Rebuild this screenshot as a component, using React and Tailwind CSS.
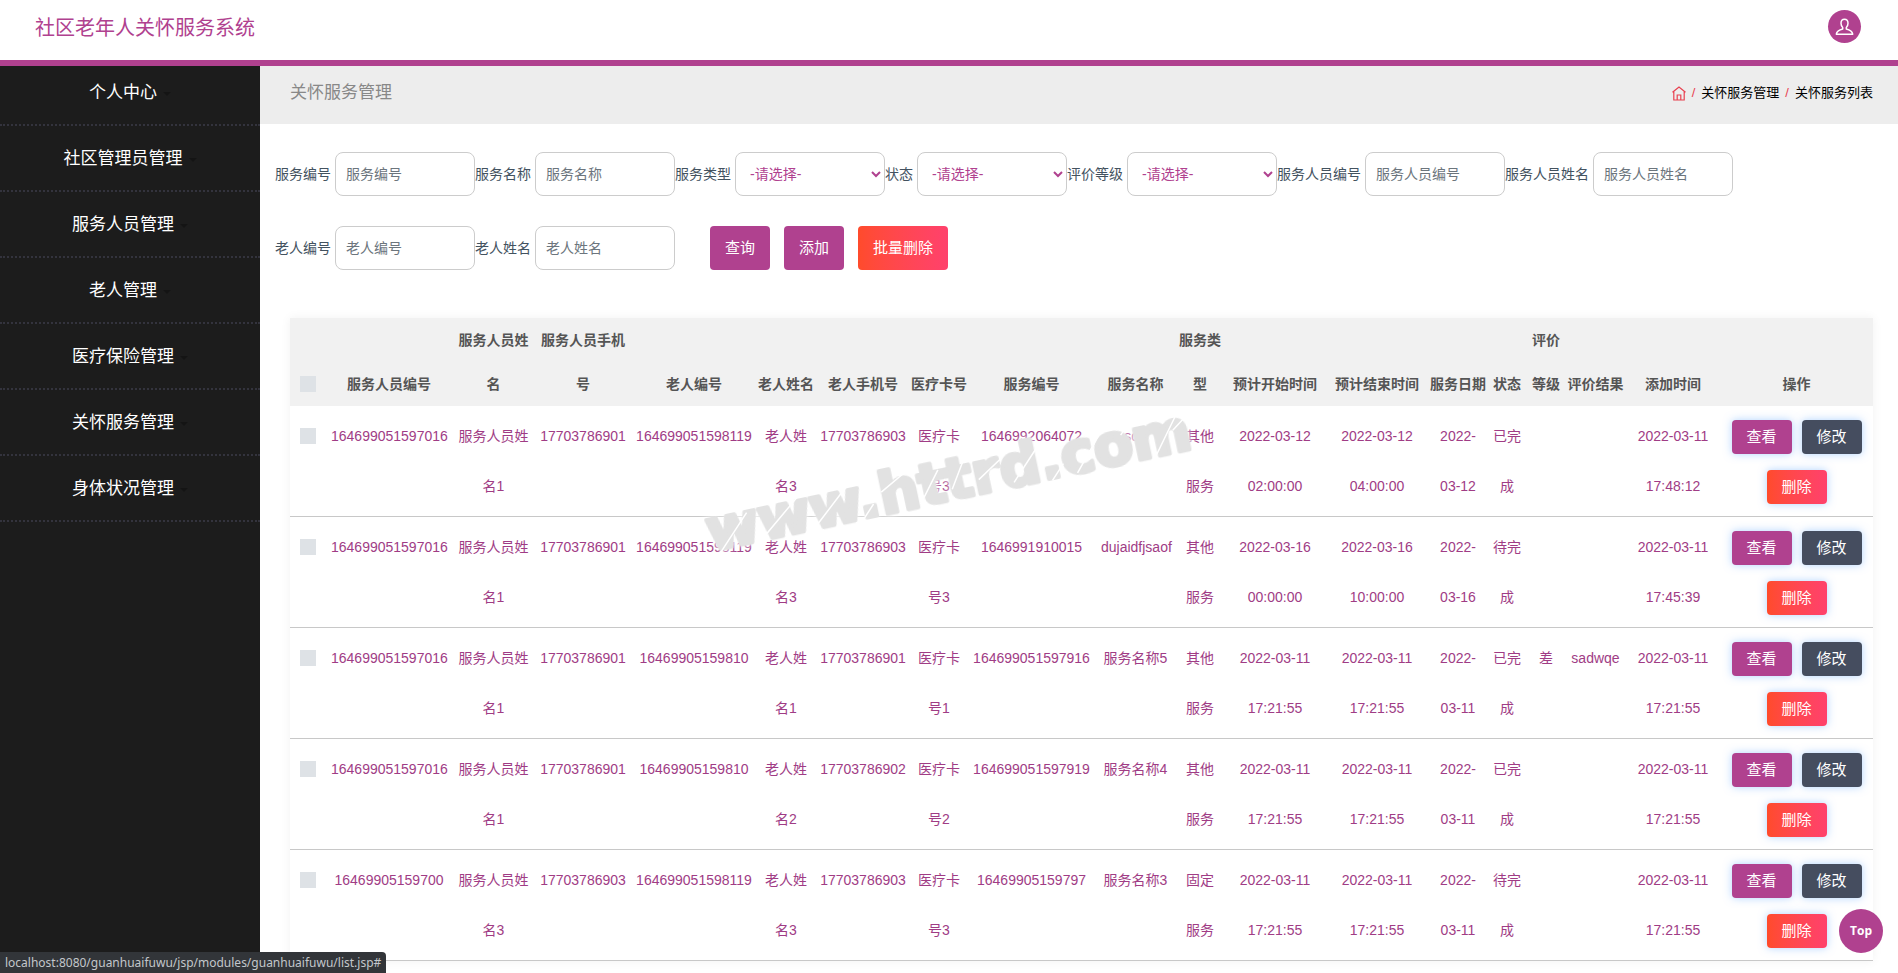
import React, { useState } from 'react';

const MENU = ['个人中心', '社区管理员管理', '服务人员管理', '老人管理', '医疗保险管理', '关怀服务管理', '身体状况管理'];

const FILTERS = [
    { id: 'fuwubianhao', label: '服务编号' },
    { id: 'fuwumingcheng', label: '服务名称' },
    { id: 'fuwuleixing', label: '服务类型', select: true },
    { id: 'zhuangtai', label: '状态', select: true },
    { id: 'pingjiadengji', label: '评价等级', select: true },
    { id: 'renyuanbianhao', label: '服务人员编号' },
    { id: 'renyuanxingming', label: '服务人员姓名' },
    { id: 'laorenbianhao', label: '老人编号' },
    { id: 'laorenxingming', label: '老人姓名' },
];

const COLUMNS = [
    { title: '服务人员编号', width: 'w-[126px]' },
    { title: '服务人员姓名', width: 'w-[83px]' },
    { title: '服务人员手机号', width: 'w-[96px]' },
    { title: '老人编号', width: 'w-[126px]' },
    { title: '老人姓名', width: 'w-[58px]' },
    { title: '老人手机号', width: 'w-[96px]' },
    { title: '医疗卡号', width: 'w-[56px]' },
    { title: '服务编号', width: 'w-[129px]' },
    { title: '服务名称', width: 'w-[79px]' },
    { title: '服务类型', width: 'w-[50px]' },
    { title: '预计开始时间', width: 'w-[100px]' },
    { title: '预计结束时间', width: 'w-[104px]' },
    { title: '服务日期', width: 'w-[58px]' },
    { title: '状态', width: 'w-[40px]' },
    { title: '评价等级', width: 'w-[38px]' },
    { title: '评价结果', width: 'w-[61px]' },
    { title: '添加时间', width: 'w-[94px]' },
];

const ROWS = [
    ['164699051597016', '服务人员姓名1', '17703786901', '164699051598119', '老人姓名3', '17703786903', '医疗卡号3', '1646992064072', 'sda', '其他服务', '2022-03-12 02:00:00', '2022-03-12 04:00:00', '2022-03-12', '已完成', '', '', '2022-03-11 17:48:12'],
    ['164699051597016', '服务人员姓名1', '17703786901', '164699051598119', '老人姓名3', '17703786903', '医疗卡号3', '1646991910015', 'dujaidfjsaof', '其他服务', '2022-03-16 00:00:00', '2022-03-16 10:00:00', '2022-03-16', '待完成', '', '', '2022-03-11 17:45:39'],
    ['164699051597016', '服务人员姓名1', '17703786901', '16469905159810', '老人姓名1', '17703786901', '医疗卡号1', '164699051597916', '服务名称5', '其他服务', '2022-03-11 17:21:55', '2022-03-11 17:21:55', '2022-03-11', '已完成', '差', 'sadwqe', '2022-03-11 17:21:55'],
    ['164699051597016', '服务人员姓名1', '17703786901', '16469905159810', '老人姓名2', '17703786902', '医疗卡号2', '164699051597919', '服务名称4', '其他服务', '2022-03-11 17:21:55', '2022-03-11 17:21:55', '2022-03-11', '已完成', '', '', '2022-03-11 17:21:55'],
    ['16469905159700', '服务人员姓名3', '17703786903', '164699051598119', '老人姓名3', '17703786903', '医疗卡号3', '16469905159797', '服务名称3', '固定服务', '2022-03-11 17:21:55', '2022-03-11 17:21:55', '2022-03-11', '待完成', '', '', '2022-03-11 17:21:55'],
];

function UserIcon() {
    return (
        <svg width="19" height="18" viewBox="0 0 19 18" fill="none" stroke="currentColor" strokeWidth="1.5" strokeLinejoin="round">
            <path d="M9.5 1.2c-2.2 0-3.5 1.7-3.500 4 0 1.900.7 3.400 1.700 4.300v1.600c-2.900.7-5.800 1.700-6.400 5.100h16.400c-.6-3.400-3.500-4.400-6.400-5.100V9.500c1-.9 1.700-2.400 1.700-4.300 0-2.300-1.300-4-3.500-4z" />
        </svg>
    );
}

function HomeIcon() {
    return (
        <svg width="14" height="15" viewBox="0 0 14 15" fill="none" stroke="currentColor" strokeWidth="1.2">
            <path d="M.5 6.300 7 1l6.500 5.300M1.800 5.500v8.500h10.400V5.500M5.200 14V9h3.600v5" />
        </svg>
    );
}

function Watermark() {
    return (
        <svg className="absolute left-[418px] top-[334px] pointer-events-none" width="540" height="170" viewBox="0 0 540 170" aria-hidden="true">
            <g transform="rotate(-12 270 85)" fontSize="57" fontWeight="bold" fontFamily="'DejaVu Sans', sans-serif" strokeLinejoin="round">
                {/* The text's own halo goes below the grey letters */}
                <text
                    x="270" y="106" textAnchor="middle" fill="#e2e2e2" stroke="#e2e2e2" strokeWidth="4"
                    className="drop-shadow-[0_0_3px_#ffffff]"
                >
                    www.httrd.com
                </text>
                <path
                    d="M32 110 66 76M72 108l46-36M124 110l44-38M178 108l14-14M202 84l30-16M238 104l24-30M272 96l18-28M300 92l26-16M334 102l34-34M372 108l14-14M398 106l30-34M448 78l14-14M478 106l28-36M500 84l20-14"
                    stroke="#ffffff" strokeWidth="1.5" fill="none"
                />
            </g>
        </svg>
    );
}

function Field({ id, label, select }) {
    return (
        <div className="flex items-center gap-1">
            <label htmlFor={id} className="text-[#43525f] whitespace-nowrap">{label}</label>
            {select ? (
                <select id={id} className="w-[150px] h-11 pl-2.5 border border-[#ccc] rounded-lg bg-white text-[#b0418f] outline-none">
                    <option>-请选择-</option>
                </select>
            ) : (
                <input
                    id={id}
                    type="text"
                    placeholder={label}
                    className="w-[140px] h-11 px-2.5 border border-[#ccc] rounded-lg bg-white text-[#b0418f] placeholder:text-[#6c757d] outline-none"
                />
            )}
        </div>
    );
}

function RowButton({ children, className }) {
    return (
        <button type="button" className={`w-[60px] h-[34px] my-2 rounded text-white text-[15px] shadow-[0_0_8px_rgba(100,170,255,0.5)] ${className}`}>
            {children}
        </button>
    );
}

export default function App() {
    const [selected, setSelected] = useState([]);
    const allSelected = selected.length === ROWS.length;

    const toggle = (idx) => {
        setSelected(prev => prev.includes(idx) ? prev.filter(i => i !== idx) : [...prev, idx]);
    };

    const checkbox = 'block appearance-none size-4 mx-auto bg-[#dee2e6] checked:bg-[#b0418f]';

    return (
        <div className="h-screen flex flex-col overflow-hidden bg-white text-sm font-['Liberation_Sans','Noto_Sans_CJK_SC',sans-serif]">
            <header className="relative z-10 shrink-0 h-[66px] pb-1.5 pl-[35px] pr-[37px] flex items-start justify-between bg-white border-b-6 border-[#b0418f]">
                <h1 className="mt-3 text-xl leading-8 text-[#b0418f]">社区老年人关怀服务系统</h1>
                <button type="button" aria-label="个人中心" className="mt-2.5 size-[33px] rounded-full bg-[#b0418f] text-white flex items-center justify-center">
                    <UserIcon />
                </button>
            </header>

            {/* Slides under the header's bottom border */}
            <div className="flex flex-1 min-h-0 -mt-1.5">
                <nav className="w-[260px] shrink-0 bg-[#1c1c1c]">
                    {MENU.map(item => (
                        <a key={item} href="#" className="flex items-center justify-center h-[66px] pt-[3px] border-b-2 border-dotted border-[#33333d] text-[17px] text-white">
                            {item}
                            <span className="ml-1.5 border-x-4 border-t-4 border-x-transparent border-t-[#141414]" />
                        </a>
                    ))}
                </nav>

                <main className="relative flex-1 min-w-0 overflow-y-auto [scrollbar-width:none]">
                    <div className="h-16 pt-0.5 pl-[30px] pr-[25px] flex items-center justify-between bg-[#ededed]">
                        <h2 className="text-[17px] text-[#888]">关怀服务管理</h2>
                        <div className="flex items-center gap-1.5 text-[13px] text-[#e8404f]">
                            <a href="#" aria-label="首页"><HomeIcon /></a>
                            <span>/</span>
                            <a href="#" className="text-black">关怀服务管理</a>
                            <span>/</span>
                            <a href="#" className="text-black">关怀服务列表</a>
                        </div>
                    </div>

                    <form className="flex flex-wrap gap-y-[30px] pt-7 pl-[15px]" onSubmit={e => e.preventDefault()}>
                        {FILTERS.map(f => <Field key={f.id} {...f} />)}
                        <div className="flex gap-3.5 ml-[35px] text-white text-[15px]">
                            <button type="submit" className="w-[60px] h-11 rounded bg-[#b0418f]">查询</button>
                            <button type="button" className="w-[60px] h-11 rounded bg-[#b0418f]">添加</button>
                            <button type="button" className="w-[90px] h-11 rounded bg-linear-to-r from-[#ff4b2b] to-[#ff416c]">批量删除</button>
                        </div>
                    </form>

                    <div className="mt-12 ml-[30px] mr-[25px] shadow-[0_0_10px_rgba(0,0,0,0.06)]">
                        <table className="w-full table-fixed text-center">
                            <thead className="bg-[#f1f1f1] text-[#555] leading-[44px]">
                                <tr>
                                    <th className="w-9 pb-3.5 align-bottom">
                                        <input
                                            type="checkbox"
                                            aria-label="全选"
                                            className={checkbox}
                                            checked={allSelected}
                                            onChange={() => setSelected(allSelected ? [] : ROWS.map((_, i) => i))}
                                        />
                                    </th>
                                    {COLUMNS.map(c => (
                                        <th key={c.title} className={`${c.width} align-bottom font-bold`}>{c.title}</th>
                                    ))}
                                    <th className="w-[153px] align-bottom font-bold">操作</th>
                                </tr>
                            </thead>
                            <tbody className="text-[#a03c85] leading-[50px]">
                                {ROWS.map((row, idx) => (
                                    <tr key={idx} className="border-b border-[#c8c8c8]">
                                        <td className="pt-[22px] align-top">
                                            <input
                                                type="checkbox"
                                                aria-label={`选择第${idx + 1}行`}
                                                className={checkbox}
                                                checked={selected.includes(idx)}
                                                onChange={() => toggle(idx)}
                                            />
                                        </td>
                                        {row.map((cell, i) => (
                                            <td key={i} className="p-[5px] align-top">{cell}</td>
                                        ))}
                                        <td className="pt-1.5 pb-1 align-top">
                                            <div className="flex flex-wrap justify-center gap-x-2.5 leading-5">
                                                <RowButton className="bg-[#b0418f]">查看</RowButton>
                                                <RowButton className="bg-[#454d5f]">修改</RowButton>
                                                <RowButton className="bg-linear-to-r from-[#ff4b2b] to-[#ff416c]">删除</RowButton>
                                            </div>
                                        </td>
                                    </tr>
                                ))}
                            </tbody>
                        </table>
                    </div>

                    <Watermark />
                </main>
            </div>

            <button type="button" className="fixed right-[15px] bottom-5 z-20 size-11 rounded-full bg-[#b0418f] text-white text-xs font-bold font-['Open_Sans',sans-serif]">
                Top
            </button>

            <div className="fixed left-0 bottom-0 z-20 h-[21px] px-[5px] rounded-tr bg-[#323539] text-[#c3c7cb] text-xs leading-[21px] font-['Noto_Sans',sans-serif]">
                localhost:8080/guanhuaifuwu/jsp/modules/guanhuaifuwu/list.jsp#
            </div>
        </div>
    );
}
